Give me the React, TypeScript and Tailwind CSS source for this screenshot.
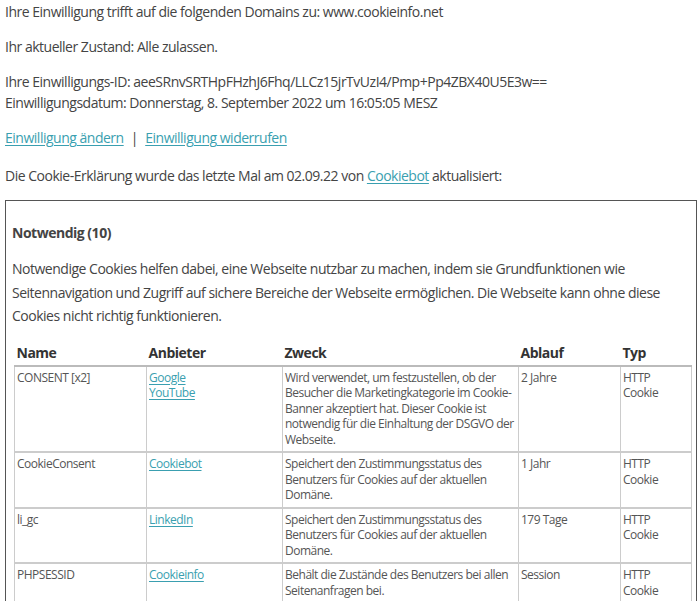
import React from "react";

const L = ({ children }: { children: React.ReactNode }) => (
  <a className="text-[#3a9fb0] underline underline-offset-2">{children}</a>
);

const rows = [
  ["CONSENT [x2]", ["Google", "YouTube"], "Wird verwendet, um festzustellen, ob der Besucher die Marketingkategorie im Cookie-Banner akzeptiert hat. Dieser Cookie ist notwendig für die Einhaltung der DSGVO der Webseite.", "2 Jahre"],
  ["CookieConsent", ["Cookiebot"], "Speichert den Zustimmungsstatus des Benutzers für Cookies auf der aktuellen Domäne.", "1 Jahr"],
  ["li_gc", ["LinkedIn"], "Speichert den Zustimmungsstatus des Benutzers für Cookies auf der aktuellen Domäne.", "179 Tage"],
  ["PHPSESSID", ["Cookieinfo"], "Behält die Zustände des Benutzers bei allen Seitenanfragen bei.", "Session"],
] as const;

export default function App() {
  return (
    <div className="w-[700px] h-[601px] overflow-hidden bg-white text-[#444] pl-[5px] pt-[1px] text-[14px] leading-[21px] tracking-[-0.035em]" style={{ fontFamily: '"Open Sans", sans-serif' }}>
      <p className="mb-[14px]">Ihre Einwilligung trifft auf die folgenden Domains zu: www.cookieinfo.net</p>
      <p className="mb-[14px]">Ihr aktueller Zustand: Alle zulassen.</p>
      <p>Ihre Einwilligungs-ID: aeeSRnvSRTHpFHzhJ6Fhq/LLCz15jrTvUzI4/Pmp+Pp4ZBX40U5E3w==</p>
      <p className="mb-[14px]">Einwilligungsdatum: Donnerstag, 8. September 2022 um 16:05:05 MESZ</p>
      <p className="mb-[17px]"><L>Einwilligung ändern</L> <span className="mx-[4px]">|</span> <L>Einwilligung widerrufen</L></p>
      <p className="mb-[14px]">Die Cookie-Erklärung wurde das letzte Mal am 02.09.22 von <L>Cookiebot</L> aktualisiert:</p>
      <div className="w-[692px] border border-[#555] px-[6px] pt-[21px]">
        <p className="font-bold mb-[14px]">Notwendig (10)</p>
        <p className="leading-[23.5px] mb-[14px]">Notwendige Cookies helfen dabei, eine Webseite nutzbar zu machen, indem sie Grundfunktionen wie Seitennavigation und Zugriff auf sichere Bereiche der Webseite ermöglichen. Die Webseite kann ohne diese Cookies nicht richtig funktionieren.</p>
        <table className="w-[677px] ml-[2px] border-collapse table-fixed">
          <colgroup>
            <col className="w-[132px]" /><col className="w-[136px]" /><col className="w-[236px]" /><col className="w-[102px]" /><col className="w-[71px]" />
          </colgroup>
          <thead>
            <tr className="text-left text-[14px] font-bold text-[#333]">
              {["Name", "Anbieter", "Zweck", "Ablauf", "Typ"].map((h) => (
                <th key={h} className="px-[2px] pb-[2px] border-b-2 border-[#bbb] font-bold">{h}</th>
              ))}
            </tr>
          </thead>
          <tbody className="text-[12px] leading-[15.5px] text-[#555]">
            {rows.map((r) => (
              <tr key={r[0]} className="border-b-2 border-[#ccc] align-top">
                <td className="px-[2px] pt-[3px] pb-[4px] border-l border-[#ccc]">{r[0]}</td>
                <td className="px-[2px] pt-[3px] pb-[4px] border-l border-[#ccc]">
                  {r[1].map((p) => (<div key={p}><L>{p}</L></div>))}
                </td>
                <td className="px-[2px] pt-[3px] pb-[4px] border-l border-[#ccc]">{r[2]}</td>
                <td className="px-[2px] pt-[3px] pb-[4px] border-l border-[#ccc]">{r[3]}</td>
                <td className="px-[2px] pt-[3px] pb-[4px] border-l border-r border-[#ccc]">HTTP<br />Cookie</td>
              </tr>
            ))}
          </tbody>
        </table>
      </div>
    </div>
  );
}
